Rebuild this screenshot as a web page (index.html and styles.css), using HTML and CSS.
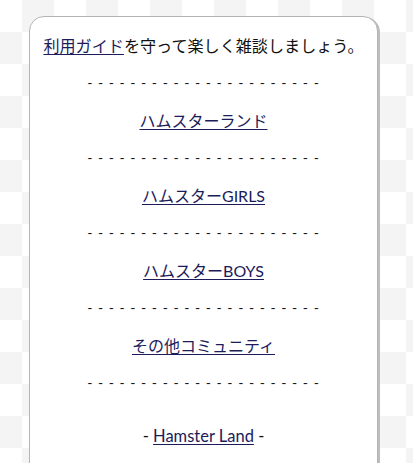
FILE: index.html
```html
<!DOCTYPE html>
<html lang="ja">
<head>
<meta charset="utf-8">
<link rel="stylesheet" href="styles.css">
</head>
<body>
<div class="card">
  <p class="line intro"><a href="#">利用ガイド</a>を守って楽しく雑談しましょう。</p>
  <p class="line dash">- - - - - - - - - - - - - - - - - - - - - -</p>
  <p class="line"><a href="#">ハムスターランド</a></p>
  <p class="line dash">- - - - - - - - - - - - - - - - - - - - - -</p>
  <p class="line"><a href="#">ハムスターGIRLS</a></p>
  <p class="line dash">- - - - - - - - - - - - - - - - - - - - - -</p>
  <p class="line"><a href="#">ハムスターBOYS</a></p>
  <p class="line dash">- - - - - - - - - - - - - - - - - - - - - -</p>
  <p class="line"><a href="#">その他コミュニティ</a></p>
  <p class="line dash">- - - - - - - - - - - - - - - - - - - - - -</p>
  <p class="line footer">- <a href="#">Hamster Land</a> -</p>
</div>
</body>
</html>
```
FILE: styles.css
```css
html, body {
  margin: 0;
  padding: 0;
}
body {
  height: 463px;
  overflow: hidden;
  background-color: #fff;
  background-image: repeating-conic-gradient(#fff 0 25%, #f4f4f4 0 50%);
  background-size: 64px 64px;
  background-position: 22px 0;
  font-family: "Lato", "Noto Sans CJK JP", sans-serif;
  color: #111;
  padding-top: 16px;
}
.card {
  margin-left: 29px;
  width: 349px;
  height: 470px;
  box-sizing: border-box;
  background: #fff;
  border: 1px solid #b4b4b4;
  border-radius: 15px;
  box-shadow: 2px 1px 0 #bdbdbd;
  padding-top: 17px;
  display: flex;
  flex-direction: column;
  align-items: center;
  gap: 13.5px;
}
.line {
  margin: 0;
  font-size: 16px;
  line-height: 24px;
  white-space: nowrap;
  text-align: center;
}
.intro {
  font-size: 16.1px;
}
.line a {
  color: #1c1c5a;
  text-decoration: underline;
  text-underline-offset: 2px;
}
.dash {
  font-size: 14px;
  letter-spacing: 1px;
  margin-top: -1px;
  margin-bottom: 1px;
}
.footer {
  margin-top: 15px;
  font-size: 16.5px;
}
```
